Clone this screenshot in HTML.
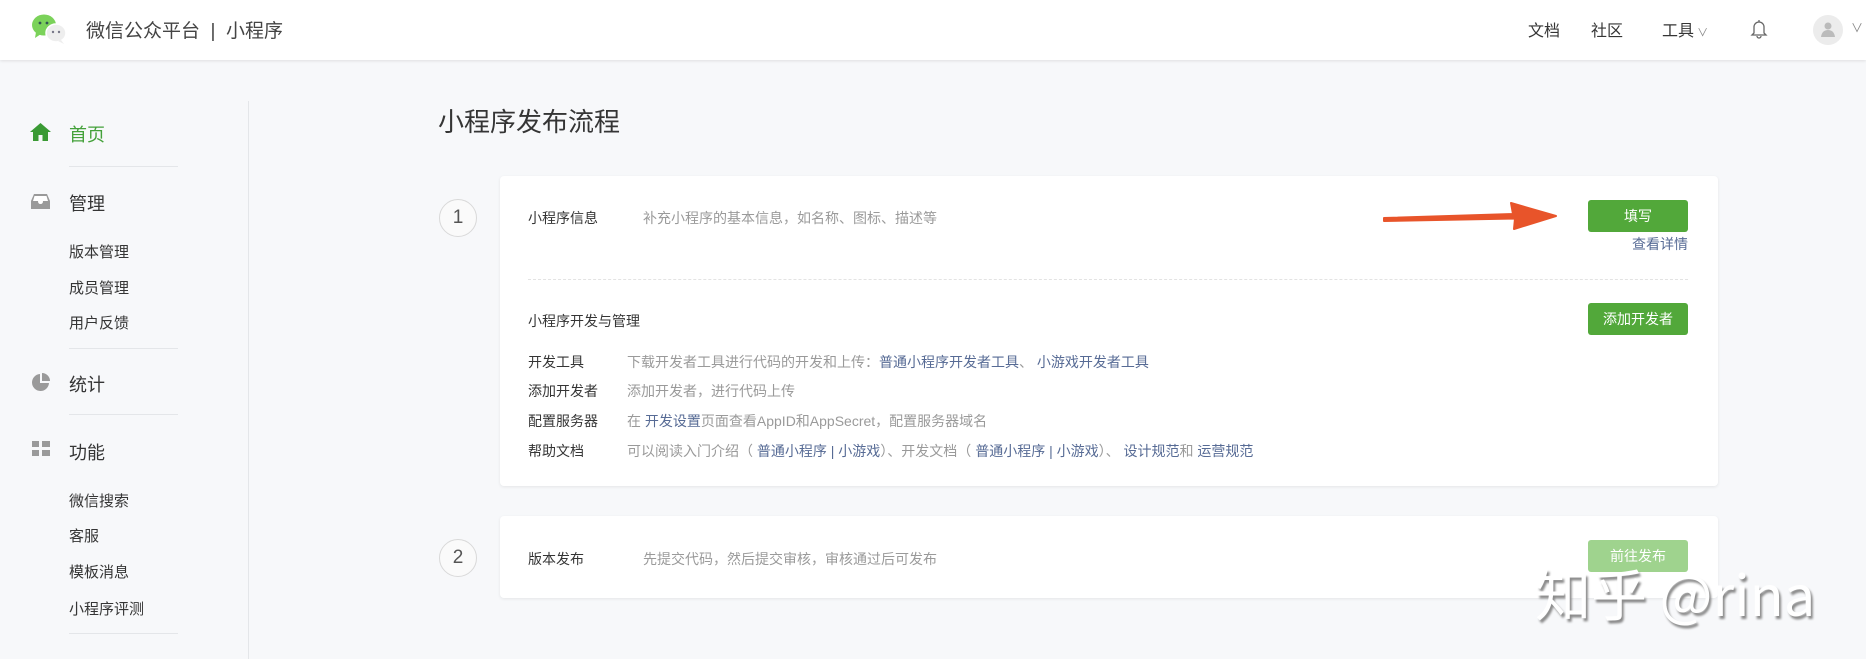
<!DOCTYPE html>
<html><head><meta charset="utf-8"><style>
*{margin:0;padding:0;box-sizing:border-box}
body{width:1866px;height:659px;overflow:hidden;background:#f7f8fa;font-family:"Liberation Sans","Noto Sans CJK SC",sans-serif;color:#353535;position:relative}
.a{position:absolute;white-space:nowrap}
.hd{position:absolute;left:0;top:0;width:1866px;height:60px;background:#fff;box-shadow:0 1px 3px rgba(0,0,0,.1)}
.nav{font-size:16px;color:#353535;top:17px}
.side1{font-size:18px;color:#353535}
.side2{font-size:15px;color:#353535}
.sep{position:absolute;left:69px;width:109px;height:1px;background:#e4e6e9}
.card{position:absolute;left:500px;width:1218px;background:#fff;border-radius:4px;box-shadow:0 1px 3px rgba(0,0,0,.08)}
.circ{position:absolute;width:38px;height:38px;border:1px solid #d9d9d9;border-radius:50%;text-align:center;line-height:36px;font-size:19px;color:#555;background:#fafafa}
.t{font-size:14px;color:#353535}
.g{font-size:14px;color:#9a9a9a}
.l{color:#576b95}
.btn{position:absolute;left:1588px;width:100px;height:32px;background:#52a83a;color:#fff;font-size:14px;text-align:center;line-height:32px;border-radius:3px}
</style></head><body>
<div class="hd"></div>
<svg class="a" style="left:30px;top:13px" width="40" height="32" viewBox="0 0 40 32">
<ellipse cx="14" cy="12" rx="12" ry="10.5" fill="#7bd25a"/><path d="M6 19 L5 25 L11 21Z" fill="#7bd25a"/>
<circle cx="10" cy="10" r="1.4" fill="#355"/><circle cx="17" cy="10" r="1.4" fill="#355"/>
<ellipse cx="26" cy="20" rx="10" ry="9" fill="#eee" stroke="#fff" stroke-width="1.5"/><path d="M31 27 L34 31 L28 28Z" fill="#eee"/>
<circle cx="23" cy="19" r="1.2" fill="#778"/><circle cx="29" cy="19" r="1.2" fill="#778"/></svg>
<div class="a" style="left:86px;top:16px;font-size:19px;color:#444">微信公众平台 &nbsp;|&nbsp; 小程序</div>
<div class="a nav" style="left:1528px">文档</div>
<div class="a nav" style="left:1591px">社区</div>
<div class="a nav" style="left:1662px">工具<span style="font-size:11px;color:#888"> ∨</span></div>
<svg class="a" style="left:1750px;top:18px" width="18" height="22" viewBox="0 0 18 22"><path d="M4 15 V9 a5 5 0 0 1 10 0 V15 L16 17 H2 Z M7 18 a2 2 0 0 0 4 0" fill="none" stroke="#666" stroke-width="1.3"/><path d="M9 2v2" stroke="#666" stroke-width="1.3"/></svg>
<div class="a" style="left:1813px;top:15px;width:30px;height:30px;border-radius:50%;background:#ececec"></div>
<svg class="a" style="left:1819px;top:20px" width="18" height="18" viewBox="0 0 18 18"><circle cx="9" cy="6" r="3.5" fill="#bbb"/><path d="M2 17 Q3 10 9 10 Q15 10 16 17Z" fill="#bbb"/></svg>
<div class="a" style="left:1851px;top:19px;font-size:12px;color:#888">∨</div>

<div class="a" style="left:248px;top:101px;width:1px;height:558px;background:#e4e6e9"></div>
<svg class="a" style="left:30px;top:123px" width="21" height="18" viewBox="0 0 21 18"><path d="M10.5 0 L21 9 H18 V18 H12.5 V12 H8.5 V18 H3 V9 H0Z" fill="#3a9a34"/></svg>
<div class="a side1" style="left:69px;top:121px;color:#44a13a">首页</div>
<div class="sep" style="top:166px"></div>
<svg class="a" style="left:31px;top:193px" width="19" height="16" viewBox="0 0 19 16"><path d="M3 1 H16 L19 8 V16 H0 V8Z" fill="#9a9a9a"/><path d="M3.5 3 H15.5 L17 8 H12 Q12 11 9.5 11 Q7 11 7 8 H2Z" fill="#fff"/></svg>
<div class="a side1" style="left:69px;top:190px">管理</div>
<div class="a side2" style="left:69px;top:241px">版本管理</div>
<div class="a side2" style="left:69px;top:277px">成员管理</div>
<div class="a side2" style="left:69px;top:312px">用户反馈</div>
<div class="sep" style="top:348px"></div>
<svg class="a" style="left:31px;top:373px" width="20" height="18" viewBox="0 0 20 18"><path d="M9 1 A8.5 8.5 0 1 0 18 10 H9Z" fill="#9a9a9a"/><path d="M11 0 A8 8 0 0 1 19 8 H11Z" fill="#9a9a9a"/></svg>
<div class="a side1" style="left:69px;top:371px">统计</div>
<div class="sep" style="top:414px"></div>
<svg class="a" style="left:32px;top:441px" width="19" height="16" viewBox="0 0 19 16"><rect x="0" y="0" width="7" height="6" fill="#9a9a9a"/><rect x="10" y="0" width="8" height="6" fill="#9a9a9a"/><rect x="0" y="9" width="7" height="6" fill="#9a9a9a"/><rect x="10" y="9" width="8" height="6" fill="#9a9a9a"/></svg>
<div class="a side1" style="left:69px;top:439px">功能</div>
<div class="a side2" style="left:69px;top:490px">微信搜索</div>
<div class="a side2" style="left:69px;top:525px">客服</div>
<div class="a side2" style="left:69px;top:561px">模板消息</div>
<div class="a side2" style="left:69px;top:598px">小程序评测</div>
<div class="sep" style="top:633px"></div>

<div class="a" style="left:438px;top:102px;font-size:26px;color:#353535">小程序发布流程</div>

<div class="circ" style="left:439px;top:199px">1</div>
<div class="card" style="top:176px;height:310px"></div>
<div class="a t" style="left:528px;top:208px">小程序信息</div>
<div class="a g" style="left:643px;top:208px">补充小程序的基本信息，如名称、图标、描述等</div>
<svg class="a" style="left:1380px;top:202px" width="180" height="34" viewBox="0 0 180 34"><path d="M4 19 L135 16.5 L134 27 L176 14 L131 1 L133 12 L4 16Z" fill="#e8542a" stroke="#e8542a" stroke-width="2" stroke-linejoin="round"/></svg>
<div class="btn" style="top:200px">填写</div>
<div class="a" style="left:1632px;top:234px;font-size:14px;color:#576b95">查看详情</div>
<div class="a" style="left:528px;top:279px;width:1160px;border-top:1px dashed #e3e3e3"></div>
<div class="a t" style="left:528px;top:311px">小程序开发与管理</div>
<div class="btn" style="top:303px">添加开发者</div>
<div class="a t" style="left:528px;top:352px">开发工具</div>
<div class="a g" style="left:627px;top:352px">下载开发者工具进行代码的开发和上传：<span class="l">普通小程序开发者工具</span>、 <span class="l">小游戏开发者工具</span></div>
<div class="a t" style="left:528px;top:381px">添加开发者</div>
<div class="a g" style="left:627px;top:381px">添加开发者，进行代码上传</div>
<div class="a t" style="left:528px;top:411px">配置服务器</div>
<div class="a g" style="left:627px;top:411px">在 <span class="l">开发设置</span>页面查看AppID和AppSecret，配置服务器域名</div>
<div class="a t" style="left:528px;top:441px">帮助文档</div>
<div class="a g" style="left:627px;top:441px">可以阅读入门介绍（ <span class="l">普通小程序 | 小游戏</span>）、开发文档（ <span class="l">普通小程序 | 小游戏</span>）、 <span class="l">设计规范</span>和 <span class="l">运营规范</span></div>

<div class="circ" style="left:439px;top:539px">2</div>
<div class="card" style="top:516px;height:82px"></div>
<div class="a t" style="left:528px;top:549px">版本发布</div>
<div class="a g" style="left:643px;top:549px">先提交代码，然后提交审核，审核通过后可发布</div>
<div class="btn" style="top:540px;background:#9fd38e">前往发布</div>
<div class="a" style="left:1535px;top:552px;font-size:56px;color:#fff;text-shadow:2px 3px 2px #8a8a8a;font-family:'Noto Sans CJK SC','Liberation Sans',sans-serif">知乎 @rina</div>
</body></html>
